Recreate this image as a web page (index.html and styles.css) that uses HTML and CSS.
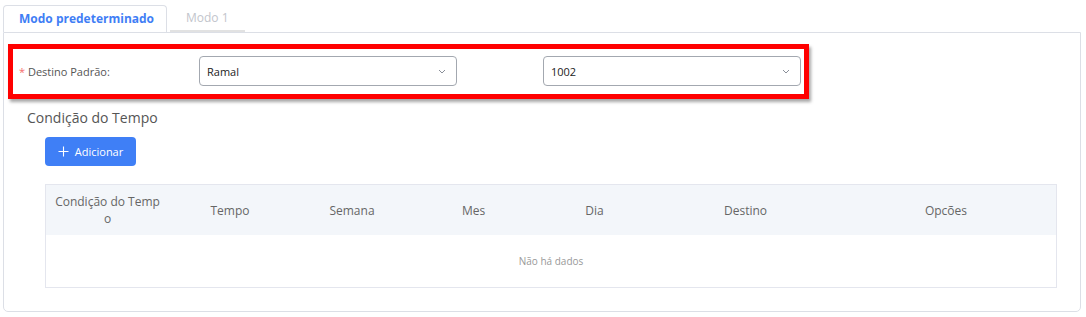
FILE: index.html
```html
<!DOCTYPE html>
<html lang="pt">
<head>
<meta charset="utf-8">
<title>Modo</title>
<link rel="stylesheet" href="styles.css">
</head>
<body>
<div class="page">
  <div class="tabs">
    <div class="tab active">Modo predeterminado</div>
    <div class="tab">Modo 1</div>
  </div>
  <div class="card">
    <div class="highlight">
      <div class="form-row">
        <label class="label"><span class="req">*</span> Destino Padrão:</label>
        <div class="select"><span>Ramal</span>
          <svg class="chev" width="8" height="5" viewBox="0 0 8 5"><path d="M1 1l3 3 3-3" fill="none" stroke="#8a8f99" stroke-width="1"/></svg>
        </div>
        <div class="spacer"></div>
        <div class="select"><span>1002</span>
          <svg class="chev" width="8" height="5" viewBox="0 0 8 5"><path d="M1 1l3 3 3-3" fill="none" stroke="#8a8f99" stroke-width="1"/></svg>
        </div>
      </div>
    </div>
    <div class="section">
      <h3 class="section-title">Condição do Tempo</h3>
      <div class="section-body">
        <button class="btn"><svg width="11" height="11" viewBox="0 0 11 11"><path d="M5.5 0.5v10M0.5 5.5h10" stroke="#fff" stroke-width="1.1" fill="none"/></svg><span>Adicionar</span></button>
        <div class="table">
          <div class="thead">
            <div class="th c1">Condição do Temp<br>o</div>
            <div class="th c2">Tempo</div>
            <div class="th c3">Semana</div>
            <div class="th c4">Mes</div>
            <div class="th c5">Dia</div>
            <div class="th c6">Destino</div>
            <div class="th c7">Opcões</div>
          </div>
          <div class="empty">Não há dados</div>
        </div>
      </div>
    </div>
  </div>
</div>
</body>
</html>
```

FILE: styles.css
```css
* { box-sizing: border-box; }
html, body { margin: 0; padding: 0; background: #fff; }
body { font-family: "Open Sans", "Noto Sans", Arial, sans-serif; color: #333; }
.page { padding: 5px 5px 0 3px; }
.tabs { display: flex; align-items: stretch; height: 27px; }
.tab { font-size: 12px; line-height: 25px; color: #c2c5cc; padding: 0 16px; margin-left: 3px; border-bottom: 2px solid #e2e2e2; height: 27px; white-space: nowrap; }
.tab.active { margin-left: 0; width: 164px; color: #3f7ef5; font-weight: 700; font-size: 12px; border: 1px solid #dcdfe6; border-bottom: none; border-radius: 4px 4px 0 0; padding: 0 0 0 15px; line-height: 26px; }
.card { border: 1px solid #dcdfe6; border-radius: 0 0 5px 5px; height: 280px; padding: 11px 23px 0 4px; }
.highlight { width: 801px; border: 5px solid #ff0000; box-shadow: 2px 3px 3px rgba(0,0,0,0.35); padding: 7px 0 8px 6px; }
.form-row { display: flex; align-items: center; }
.label { width: 180px; font-size: 11px; color: #555; }
.req { color: #f56c6c; }
.select { width: 258px; height: 30px; border: 1px solid #a3a8b0; border-radius: 4px; display: flex; align-items: center; justify-content: space-between; padding: 0 10px 0 7px; font-size: 11px; color: #222; }
.spacer { width: 86px; }
.chev { display: block; }
.section { padding-left: 19px; }
.section-title { margin: 8px 0 0; font-size: 14px; font-weight: 400; color: #555; line-height: 22px; }
.section-body { padding-left: 18px; }
.btn { margin-top: 8px; height: 29px; width: 91px; background: #3f7ff6; border: none; border-radius: 4px; color: #fff; font-family: inherit; font-size: 11px; display: flex; align-items: center; justify-content: center; gap: 6px; padding: 0; }
.table { margin-top: 18px; width: 1012px; border: 1px solid #e4e6ee; }
.thead { display: flex; height: 50px; background: #f3f6fa; align-items: center; }
.th { font-size: 12px; color: #666; text-align: center; line-height: 17px; }
.c1 { width: 123px; }
.c2 { width: 122px; }
.c3 { width: 122px; }
.c4 { width: 121px; }
.c5 { width: 121px; }
.c6 { width: 181px; }
.c7 { flex: 1; }
.empty { height: 52px; display: flex; align-items: center; justify-content: center; font-size: 10px; color: #999; }
```
